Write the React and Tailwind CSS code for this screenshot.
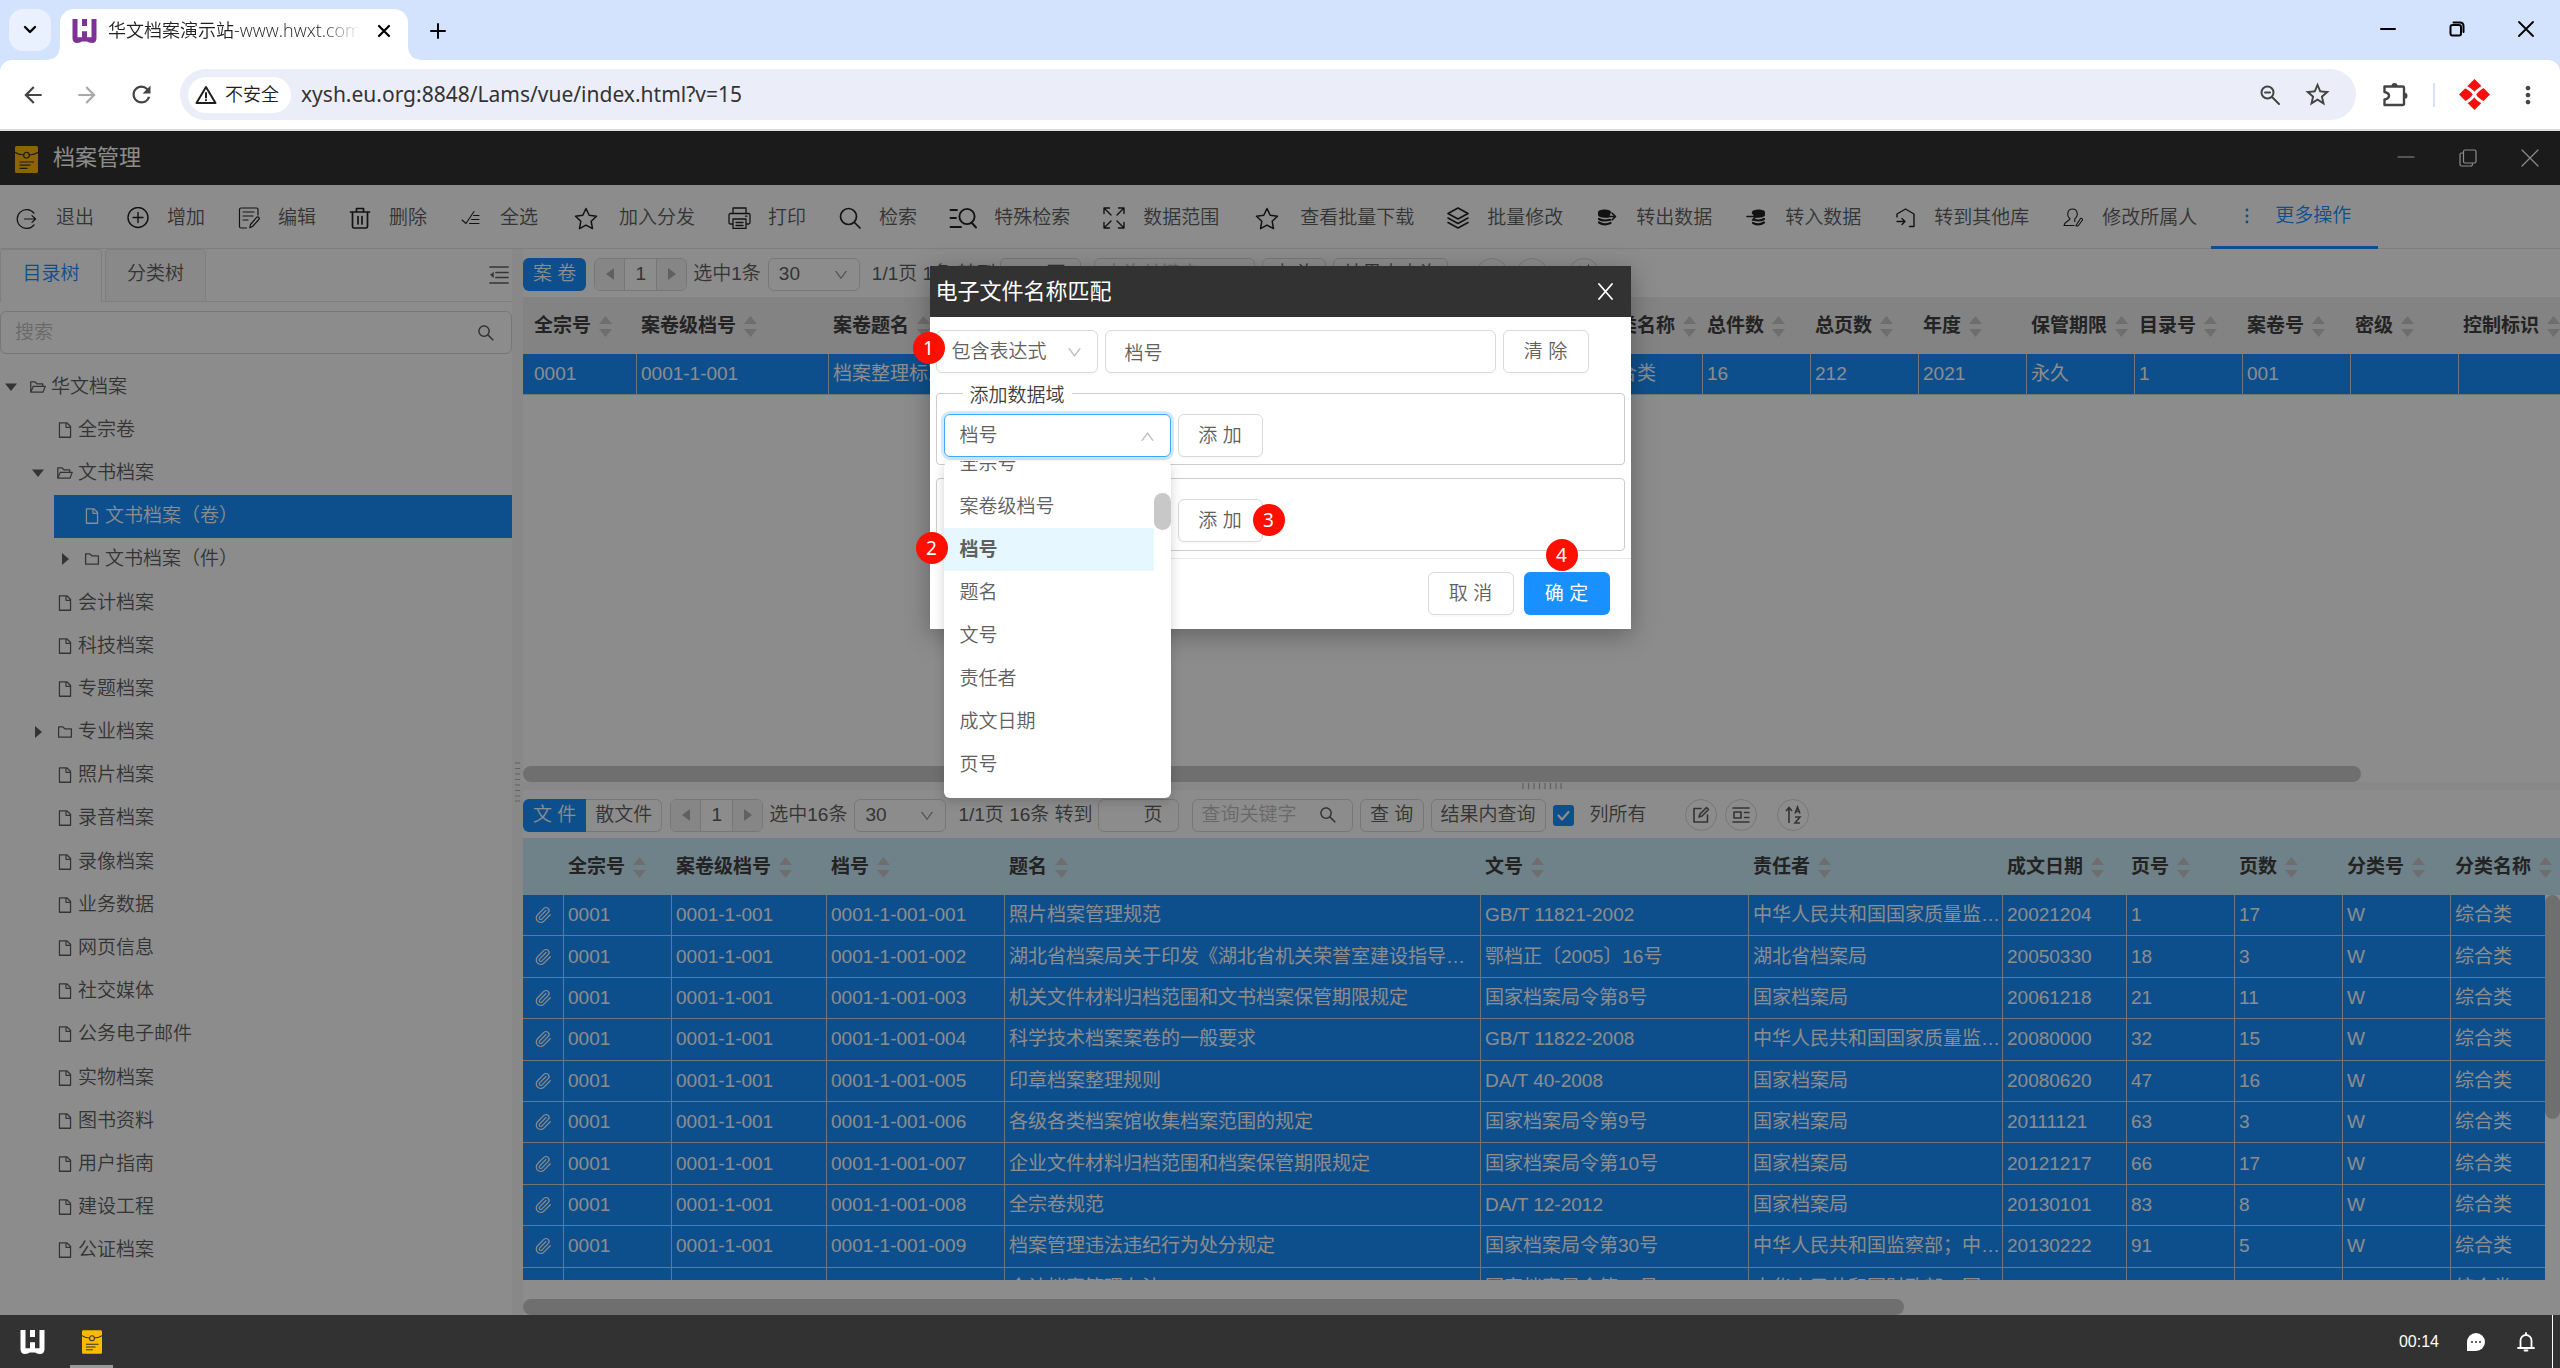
import React from "react";
import {
  AiOutlineSearch, AiOutlineFile, AiOutlineFolderOpen, AiOutlineFolder, AiOutlineDown, AiOutlineUp,
} from "react-icons/ai";
import { MdArrowBack, MdArrowForward, MdRefresh, MdStarBorder, MdMoreVert } from "react-icons/md";
import { Paperclip } from "lucide-react";

const UI = "font-['Liberation_Sans','Noto_Sans_CJK_SC',sans-serif]";

function Svg({ w = 22, h = 22, box, sw = 1.3, className = "", children }) {
  return (
    <svg width={w} height={h} viewBox={box || `0 0 ${w} ${h}`} fill="none" stroke="currentColor" strokeWidth={sw}
      strokeLinecap="round" strokeLinejoin="round" className={`shrink-0 ${className}`} aria-hidden="true">
      {children}
    </svg>
  );
}

/* ---------- logos ---------- */
const WLogo = ({ className }) => (
  <svg width="25" height="24" viewBox="0 0 24 24" className={className} fill="currentColor" aria-hidden="true">
    <path fillRule="evenodd" d="M0 0H5V18.2H9.5V12.2H14.5V18.2H19V0H24V19Q24 24 19.5 24Q16 24 14.6 22.6H9.4Q8 24 4.5 24Q0 24 0 19ZM9.5 0H14.5V7H9.5Z" />
  </svg>
);
const ArchiveLogo = ({ w, h, className }) => (
  <svg width={w} height={h} viewBox="0 0 23 27" className={className} aria-hidden="true">
    <rect width="23" height="27" rx="1.5" fill="#ffb900" />
    <g fill="none" stroke="#323232" strokeWidth="1.2">
      <path d="M0 6.2C3 8.6 6 8.8 8.6 9M23 6.2C20 8.6 17 8.8 14.4 9" />
      <circle cx="11.5" cy="9.2" r="2.8" />
      <path d="M4.5 16H19M4.5 19.2H15.5M4.5 22.4H12.5" />
    </g>
  </svg>
);

/* ---------- toolbar icons ---------- */
const IcExit = () => (
  <Svg sw={1.2}><path d="M18 6.2A9.4 9.4 0 1 0 18 17.8M8.5 12H19.5M16 8.6L19.6 12L16 15.4" /></Svg>
);
const IcPlus = () => (
  <Svg sw={1.4}><circle cx="11" cy="10.500" r="10" /><path d="M11 5.500V15.500M6 10.500H16" /></Svg>
);
const IcEdit = () => (
  <Svg sw={1.2}><path d="M20 8V2.5Q20 1 18.5 1H3Q1.5 1 1.500 2.500V19.500Q1.500 21 3 21H8.500M5 5H16M5 9H15M5 13H10M12.500 17.500L18.800 10.200Q20 9.400 21 10.600Q21.600 11.600 20.800 12.500L14.500 19.500L11.800 20.800Z" /></Svg>
);
const IcTrash = () => (
  <Svg sw={1.7}><path d="M1.500 5H20.500M3.500 5V19.500Q3.500 21 5 21H17Q18.500 21 18.500 19.500V5M7.500 4.500V1.500H14.500V4.500M9 9.500V17M13 9.500V17" /></Svg>
);
const IcCheckAll = () => (
  <Svg sw={1.1}><path d="M2 13L6 16.500L14 4.500M13.500 8.500H19M11.500 12.500H19M9.500 16.500H19" /></Svg>
);
const IcStar = () => (
  <Svg w={24} h={23} sw={1.500}><path d="M12 1.500L15.200 8.200L22.500 9.200L17.200 14.300L18.500 21.600L12 18.100L5.500 21.600L6.800 14.300L1.500 9.200L8.800 8.200Z" /></Svg>
);
const IcPrint = () => (
  <Svg w={23} sw={1.300}><path d="M5 6.500V1H18V6.500M5 17H2.500Q1 17 1 15.500V8Q1 6.500 2.500 6.500H20.500Q22 6.500 22 8V15.500Q22 17 20.500 17H18M5 12H18V21.500H5ZM8 15.500H15M8 18.500H15M17.500 9.200H19" /></Svg>
);
const IcSearch = () => (
  <Svg sw={1.7}><circle cx="9.500" cy="9.500" r="8" /><path d="M15.500 15.500L21 21" /></Svg>
);
const IcSearchList = () => (
  <Svg w={28} sw={1.9}><path d="M1.500 3H8M1.500 11H7M1.500 20H12" /><circle cx="18" cy="9.500" r="7.600" /><path d="M22.500 15.500L27 20.500" /></Svg>
);
const IcExpand = () => (
  <Svg sw={1.4}><path d="M1 6.500V1H6.500M1 1L8 8M15.500 1H21V6.500M21 1L14 8M1 15.500V21H6.500M1 21L8 14M15.500 21H21V15.500M21 21L14 14" /></Svg>
);
const IcLayers = () => (
  <Svg sw={1.6}><path d="M11 1L21 6.500L11 12L1 6.500ZM1 11L11 16.500L21 11M1 15.500L11 21L21 15.500" /></Svg>
);
const IcDbOut = () => (
  <Svg sw={1.6}>
    <path fill="currentColor" stroke="none" d="M2 5.200C2 1.500 15 1.500 15 5.200L13 10.500C9 11.300 2 10.500 2 8Z" />
    <path strokeWidth="2.200" d="M3 12Q7 14.500 14 12.800M3 15.500Q8 19 14.500 16" />
    <path d="M10 9.500H19M16 6L19.500 9.500L16 13" />
  </Svg>
);
const IcDbIn = () => (
  <Svg sw={1.6}>
    <path fill="currentColor" stroke="none" d="M7 5.200C7 1.500 20 1.500 20 5.200V8C20 10.500 13 11.300 9.500 10.500Z" />
    <path strokeWidth="2.200" d="M9 12.800Q15 14.500 19 12M8 16Q14 19 19 15.500" />
    <path d="M2 9.500H11M7.500 6L11 9.500L7.500 13" />
  </Svg>
);
const IcHouse = () => (
  <Svg sw={1.4}><path d="M3 10V7L11.500 2L20 7V19.500H15.500M3 14.500H11M8 11.500L11 14.500L8 17.500" /></Svg>
);
const IcOwner = () => (
  <Svg sw={1.1}><path d="M8 11.500C4.500 9 5 2 10.500 2S16.500 9 13 11.500C13 13 12 13.500 13 14.500M8 11.500C8 14 2.500 14 2 18.500H12M14 18.500L18.500 11.500Q20.500 11 20.500 13L16 19H14Z" /></Svg>
);

const TOOLS = [
  [IcExit, "退出"], [IcPlus, "增加"], [IcEdit, "编辑"], [IcTrash, "删除"], [IcCheckAll, "全选"], [IcStar, "加入分发"],
  [IcPrint, "打印"], [IcSearch, "检索"], [IcSearchList, "特殊检索"], [IcExpand, "数据范围"], [IcStar, "查看批量下载"],
  [IcLayers, "批量修改"], [IcDbOut, "转出数据"], [IcDbIn, "转入数据"], [IcHouse, "转到其他库"], [IcOwner, "修改所属人"],
];

function ToolButton({ Icon, label }) {
  const width = Icon === IcStar ? "w-[30px]" : Icon === IcSearchList ? "w-[26px]" : "w-[22px]";
  return (
    <button className="flex shrink-0 items-center gap-[18px] pt-[3px]">
      <span className={`flex justify-center text-[#222] ${width}`}><Icon /></span>
      {label}
    </button>
  );
}

/* ---------- browser chrome ---------- */
function Browser() {
  return (
    <header className="shrink-0 bg-[#d3e3fd] font-['Noto_Sans','Noto_Sans_CJK_SC',sans-serif]">
      <div className="flex h-[60px] items-start pt-[9px]">
        <button aria-label="搜索标签页" className="ml-[9px] flex size-[42px] items-center justify-center rounded-[14px] bg-[#e9f1fe]">
          <Svg w={14} h={10} sw={2.4}><path d="M2 2L7 7L12 2" /></Svg>
        </button>
        <div className="relative ml-[9px] flex h-[51px] w-[348px] items-center rounded-t-[14px] bg-white pr-[17px] pb-2 pl-3">
          <svg width="15" height="15" className="absolute bottom-0 -left-[15px]"><path d="M15 0Q15 15 0 15H15Z" fill="#fff" /></svg>
          <svg width="15" height="15" className="absolute -right-[15px] bottom-0"><path d="M0 0Q0 15 15 15H0Z" fill="#fff" /></svg>
          <WLogo className="text-[#7d3296]" />
          <span className="ml-[11px] w-[252px] overflow-hidden font-['Open_Sans','Noto_Sans_CJK_SC',sans-serif] text-[18px] font-[350] whitespace-nowrap text-[#1f1f1f] [mask-image:linear-gradient(to_right,black_85%,transparent)]">
            华文档案演示站-www.hwxt.com
          </span>
          <button aria-label="关闭标签页" className="ml-auto"><Svg w={14} h={14} sw={2.2}><path d="M2 2L12 12M12 2L2 12" /></Svg></button>
        </div>
        <button aria-label="新标签页" className="mt-[13px] ml-[21px]"><Svg w={18} h={18} sw={2}><path d="M9 2V16M2 9H16" /></Svg></button>
        <div className="mt-3 mr-[26px] ml-auto flex items-center gap-[53px]">
          <button aria-label="最小化"><Svg w={16} h={16} sw={2}><path d="M1 8H15" /></Svg></button>
          <button aria-label="还原"><Svg w={16} h={16} sw={2}><rect x="1.500" y="4" width="10.500" height="10.500" rx="2" /><path d="M4.500 1.500H11Q14.500 1.500 14.500 5V11" /></Svg></button>
          <button aria-label="关闭"><Svg w={16} h={16} sw={1.800}><path d="M1 1L15 15M15 1L1 15" /></Svg></button>
        </div>
      </div>
      <div className="flex h-[71px] items-center rounded-t-[12px] border-b-2 border-[#dedede] bg-white text-[#444]">
        <button aria-label="后退" className="ml-5"><MdArrowBack size={26} /></button>
        <button aria-label="前进" className="ml-7 text-[#a9a9a9]"><MdArrowForward size={26} /></button>
        <button aria-label="重新加载" className="ml-7"><MdRefresh size={27} /></button>
        <div className="ml-[25px] flex h-[51px] min-w-0 flex-1 items-center rounded-full bg-[#ebeef8] pr-6 pl-2">
          <button className="flex h-9 items-center gap-2 rounded-full bg-white pr-3 pl-[7px] text-[18px] font-[350] text-[#1f1f1f]">
            <Svg w={22} h={20} sw={2}><path d="M11 2L20.500 18H1.500ZM11 8V12.500M11 15V15.200" /></Svg>
            不安全
          </button>
          <input aria-label="地址" readOnly value="xysh.eu.org:8848/Lams/vue/index.html?v=15"
            className="ml-[10px] min-w-0 flex-1 bg-transparent text-[21px] text-[#333] outline-none" />
          <button aria-label="缩放"><Svg w={22} h={22} sw={2}><circle cx="8.500" cy="8.500" r="6" /><path d="M13 13L20 20M6 8.500H11" /></Svg></button>
          <button aria-label="收藏" className="ml-[22px]"><MdStarBorder size={29} /></button>
        </div>
        <button aria-label="扩展程序" className="ml-[25px]">
          <Svg w={28} h={28} sw={2.400}><path d="M3.500 5.500H21.500Q23 5.500 23 7V22.500Q23 24 21.500 24H3.500V18.500Q8 17.500 8 14.700Q8 12 3.500 11Z" /><path fill="currentColor" stroke="none" d="M10.500 5A3 3 0 0 1 16.500 5ZM23.500 11.700A3 3 0 0 1 23.500 17.700Z" /></Svg>
        </button>
        <span className="ml-6 h-6 w-[2px] bg-[#d3e3fd]" />
        <button aria-label="扩展" className="ml-6">
          <svg width="31" height="31" viewBox="0 0 31 31">
            <path d="M15.500 0L31 15.500L15.500 31L0 15.500Z" fill="#f90d0d" />
            <path d="M6 7.500Q14 12 15.500 15.500Q17 20 25 24M25 7Q17 12 15.500 15.500Q13 20 6 24" fill="none" stroke="#fff" strokeWidth="3" />
          </svg>
        </button>
        <button aria-label="菜单" className="mr-[18px] ml-6"><MdMoreVert size={28} /></button>
      </div>
    </header>
  );
}

/* ---------- left tree ---------- */
const TREE = [
  [0, "open", "华文档案"], [1, "file", "全宗卷"], [1, "open", "文书档案"], [2, "file", "文书档案（卷）", true],
  [2, "closed", "文书档案（件）"], [1, "file", "会计档案"], [1, "file", "科技档案"], [1, "file", "专题档案"],
  [1, "closed", "专业档案"], [1, "file", "照片档案"], [1, "file", "录音档案"], [1, "file", "录像档案"],
  [1, "file", "业务数据"], [1, "file", "网页信息"], [1, "file", "社交媒体"], [1, "file", "公务电子邮件"],
  [1, "file", "实物档案"], [1, "file", "图书资料"], [1, "file", "用户指南"], [1, "file", "建设工程"], [1, "file", "公证档案"],
];
const INDENT = ["ml-0", "ml-[27px]", "ml-[54px]"];

function TreeRow({ level, kind, label, active }) {
  const Icon = kind === "file" ? AiOutlineFile : kind === "open" ? AiOutlineFolderOpen : AiOutlineFolder;
  return (
    <li role="treeitem" aria-selected={!!active}
      className={`flex items-center ${INDENT[level]} ${active ? "bg-[#1890ff] text-white" : ""}`}>
      <span className="flex w-[29px] shrink-0 pl-[5px]">
        {kind !== "file" && (
          <svg width="12" height="12" viewBox="0 0 12 12" fill="currentColor">
            <path d={kind === "open" ? "M0 2.500H12L6 10Z" : "M3 0L10 6L3 12Z"} />
          </svg>
        )}
      </span>
      <Icon size={18} className="mr-1 shrink-0" />
      {label}
    </li>
  );
}

function Sidebar() {
  return (
    <aside className="flex w-[512px] shrink-0 flex-col bg-white">
      <div className="flex h-[53px] items-stretch">
        <button className="h-full w-[102px] rounded-t border border-b-0 border-[#e8e8e8] pb-1 text-[#1890ff]">目录树</button>
        <span className="w-[3px] border-b border-[#e8e8e8]" />
        <button className="w-[101px] rounded-t border border-[#e8e8e8] bg-[#fafafa] pb-1">分类树</button>
        <span className="flex flex-1 items-center justify-end border-b border-[#e8e8e8] pr-[3px]">
          <button aria-label="收起"><Svg w={20} h={18} sw={1.700}><path d="M1 1H19M7 6.500H19M7 11.500H19M1 17H19" /><path d="M4.500 6.500V11.500L1.500 9Z" fill="currentColor" strokeWidth="0.500" /></Svg></button>
        </span>
      </div>
      <label className="mt-[9px] flex h-[43px] shrink-0 items-center rounded-md border border-[#d9d9d9] pr-[15px] pl-[14px]">
        <input placeholder="搜索" aria-label="搜索" className="min-w-0 flex-1 bg-transparent outline-none placeholder:text-[#bfbfbf]" />
        <AiOutlineSearch size={20} />
      </label>
      <ul role="tree" className="mt-[11px] grid min-h-0 flex-1 auto-rows-fr pb-[43px]">
        {TREE.map(([level, kind, label, active]) => (
          <TreeRow key={label} level={level} kind={kind} label={label} active={active} />
        ))}
      </ul>
    </aside>
  );
}

/* ---------- grid pieces ---------- */
const box = "h-[33px] rounded-md border border-[#d9d9d9]";

function Pager() {
  return (
    <div className={`ml-2 flex w-[93px] items-stretch overflow-hidden ${box}`}>
      <button aria-label="上一页" className="flex flex-1 items-center justify-center border-r border-[#d9d9d9] bg-[#f5f5f5]"><svg width="8" height="12"><path d="M8 0V12L0 6Z" fill="#b0b0b0" /></svg></button>
      <span className="flex w-[31px] items-center justify-center">1</span>
      <button aria-label="下一页" className="flex flex-1 items-center justify-center border-l border-[#d9d9d9] bg-[#f5f5f5]"><svg width="8" height="12"><path d="M0 0V12L8 6Z" fill="#b0b0b0" /></svg></button>
    </div>
  );
}

function PageSize() {
  return (
    <div className="relative ml-[7px] w-[92px]">
      <select aria-label="每页条数" className={`block w-full appearance-none bg-transparent pl-[10px] ${box}`}><option>30</option></select>
      <AiOutlineDown size={16} className="pointer-events-none absolute top-[9px] right-[11px] text-[#999]" />
    </div>
  );
}

function GridBar({ primary, secondary, selected, summary, checkbox, icons }) {
  return (
    <div className="flex h-12 shrink-0 items-center pt-[2px] whitespace-nowrap">
      <button className={`h-[33px] bg-[#1890ff] px-[10px] text-white ${secondary ? "rounded-l-md" : "rounded-md"}`}>{primary}</button>
      {secondary && <button className="h-[33px] rounded-r-md border border-l-0 border-[#d9d9d9] px-[9px]">{secondary}</button>}
      <Pager />
      <span className="ml-[6px]">{selected}</span>
      <PageSize />
      <span className="ml-3">{summary}</span>
      <label className={`ml-[5px] flex w-[81px] items-center justify-end pr-[15px] ${box}`}>
        <input aria-label="页码" className="w-6 bg-transparent outline-none" />页
      </label>
      <label className={`ml-[13px] flex w-[161px] items-center pr-[14px] pl-[9px] ${box}`}>
        <input aria-label="查询关键字" placeholder="查询关键字" className="w-0 min-w-0 flex-1 bg-transparent outline-none placeholder:text-[#bfbfbf]" />
        <AiOutlineSearch size={20} />
      </label>
      <button className={`ml-[7px] w-16 ${box}`}>查 询</button>
      <button className={`ml-[7px] w-[115px] ${box}`}>结果内查询</button>
      {checkbox && (
        <label className="ml-[7px] flex items-center gap-4">
          <span className="relative flex">
            <input type="checkbox" defaultChecked className="size-[21px] appearance-none rounded-[3px] bg-[#1890ff]" />
            <Svg w={21} h={21} sw={2.200} className="pointer-events-none absolute inset-0 text-white"><path d="M5.500 10.500L9 14.500L15.500 7" /></Svg>
          </span>
          列所有
        </label>
      )}
      <div className={`flex items-center gap-2 ${checkbox ? "ml-[38px]" : "ml-7"}`}>
        {icons.map((icon, i) => (
          <button key={i} aria-label={`工具${i + 1}`} className={`flex size-8 items-center justify-center rounded-full border border-[#d9d9d9] ${i === 2 ? "ml-3" : ""}`}>{icon}</button>
        ))}
      </div>
    </div>
  );
}

const icoEdit = <Svg w={18} h={18} sw={1.600}><path d="M9 2.500H2V16H15.500V9M7 11L8 8L14.500 1.500L16.500 3.500L10 10Z" /></Svg>;
const icoCard = <Svg w={18} h={18} sw={1.600}><path d="M1 2H17M1 16H17M12.500 6.500H17M12.500 11.500H17" /><rect x="2" y="6" width="7" height="6" /></Svg>;
const icoSort = (
  <svg width="18" height="20" viewBox="0 0 18 20" fill="none" stroke="currentColor" strokeWidth="1.600">
    <path d="M5 18V3M2 6L5 2.500L8 6M11 8.500L13.500 2L16 8.500M11.800 6.500H15.200M11 12H16L11 18H16" />
  </svg>
);

const Sort = () => (
  <svg width="13" height="21" viewBox="0 0 13 21" className="ml-2 inline-block align-middle" fill="#c8c8c8" aria-hidden="true">
    <path d="M6.500 0L13 8H0ZM6.500 21L0 13H13Z" />
  </svg>
);

const ROWS_TOP = [["0001", "0001-1-001", "档案整理标准", "综合类", "16", "212", "2021", "永久", "1", "001", "", ""]];
const COLS_TOP = [
  ["全宗号", "w-[113px]"], ["案卷级档号", "w-[192px]"], ["案卷题名", "w-[766px]"], ["分类名称", "w-[108px]"], ["总件数", "w-[108px]"],
  ["总页数", "w-[108px]"], ["年度", "w-[108px]"], ["保管期限", "w-[108px]"], ["目录号", "w-[108px]"], ["案卷号", "w-[108px]"],
  ["密级", "w-[108px]"], ["控制标识", "w-[108px]"],
];
const COLS = [
  ["", "w-[40px]"], ["全宗号", "w-[108px]"], ["案卷级档号", "w-[155px]"], ["档号", "w-[178px]"], ["题名", "w-[476px]"], ["文号", "w-[268px]"],
  ["责任者", "w-[254px]"], ["成文日期", "w-[124px]"], ["页号", "w-[108px]"], ["页数", "w-[108px]"], ["分类号", "w-[108px]"], ["分类名称", ""],
];
const AQSIQ = "中华人民共和国国家质量监督检验检疫总局";
const ROWS = [
  ["照片档案管理规范", "GB/T 11821-2002", AQSIQ, "20021204", "1", "17"],
  ["湖北省档案局关于印发《湖北省机关荣誉室建设指导意见》的通知", "鄂档正〔2005〕16号", "湖北省档案局", "20050330", "18", "3"],
  ["机关文件材料归档范围和文书档案保管期限规定", "国家档案局令第8号", "国家档案局", "20061218", "21", "11"],
  ["科学技术档案案卷的一般要求", "GB/T 11822-2008", AQSIQ, "20080000", "32", "15"],
  ["印章档案整理规则", "DA/T 40-2008", "国家档案局", "20080620", "47", "16"],
  ["各级各类档案馆收集档案范围的规定", "国家档案局令第9号", "国家档案局", "20111121", "63", "3"],
  ["企业文件材料归档范围和档案保管期限规定", "国家档案局令第10号", "国家档案局", "20121217", "66", "17"],
  ["全宗卷规范", "DA/T 12-2012", "国家档案局", "20130101", "83", "8"],
  ["档案管理违法违纪行为处分规定", "国家档案局令第30号", "中华人民共和国监察部；中华人民共和国人力资源", "20130222", "91", "5"],
  ["会计档案管理办法", "国家档案局令第79号", "中华人民共和国财政部；国家档案局", "20151211", "96", "9"],
].map((r, i) => [
  <Paperclip key="clip" size={18} strokeWidth={1.600} className="mx-auto" />, "0001", "0001-1-001",
  `0001-1-001-${String(i + 1).padStart(3, "0")}`, ...r, "W", "综合类",
]);

function Grid({ cols, rows, headBg, tableClass, firstPad }) {
  return (
    <table className={`w-full table-fixed border-separate border-spacing-0 whitespace-nowrap ${tableClass}`}>
      <thead>
        <tr className={headBg}>
          {cols.map(([name, w], i) => (
            <th key={i} className={`h-[57px] overflow-hidden text-left font-bold text-[#404040] ${w} ${i === 0 ? firstPad : "pl-[5px]"}`}>
              {name && <>{name}<Sort /></>}
            </th>
          ))}
        </tr>
      </thead>
      <tbody>
        {rows.map((row, r) => (
          <tr key={r} className="bg-[#1890ff] font-normal text-white">
            {row.map((cell, i) => (
              <td key={i} className={`truncate border-b border-[#d4d4d4] ${i === 0 ? firstPad : "border-l pl-1"}`}>{cell}</td>
            ))}
          </tr>
        ))}
      </tbody>
    </table>
  );
}

/* ---------- dialog ---------- */
const OPTIONS = ["全宗号", "案卷级档号", "档号", "题名", "文号", "责任者", "成文日期", "页号"];
const btn = "h-[43px] rounded-md border border-[#d9d9d9] bg-white shadow-[0_2px_0_rgba(0,0,0,0.02)]";

const Badge = ({ n, className }) => (
  <span className={`absolute z-20 flex size-8 items-center justify-center rounded-full bg-[#ff0f00] font-['Noto_Sans',sans-serif] text-[19px] font-normal text-white ${className}`}>{n}</span>
);

function Dialog() {
  return (
    <section role="dialog" aria-label="电子文件名称匹配" className="w-[701px] self-start bg-white shadow-[0_6px_24px_rgba(0,0,0,0.3)]">
      <header className="flex h-[51px] items-center justify-between bg-[#323232] pr-[17px] pl-[6px] text-white">
        <h2 className="text-[22px] font-normal">电子文件名称匹配</h2>
        <button aria-label="关闭"><Svg w={17} h={17} sw={1.800}><path d="M2 1L15 16M15 1L2 16" /></Svg></button>
      </header>
      <div className="px-[6px] pt-[13px] pb-[7px]">
        <div className="relative flex">
          <Badge n="1" className="top-[2px] -left-[23px]" />
          <div className="relative w-[162px]">
            <select aria-label="匹配方式" className={`block w-full appearance-none pl-[15px] ${btn}`}><option>包含表达式</option></select>
            <AiOutlineDown size={17} className="pointer-events-none absolute top-[14px] right-[15px] text-[#bfbfbf]" />
          </div>
          <input aria-label="表达式" defaultValue="档号" className={`ml-[7px] w-[391px] pl-[19px] ${btn}`} />
          <button className={`ml-[7px] w-[86px] ${btn}`}>清 除</button>
        </div>
        <fieldset className="rounded-sm border border-[#ccc] px-[7px] pb-[7px]">
          <legend className="ml-[19px] h-[41px] bg-white px-[7px] leading-[46px] text-[#404040]">添加数据域</legend>
          <div className="relative flex">
            <div className="relative w-[227px]">
              <select aria-label="数据域" className="block h-[43px] w-full appearance-none rounded-md border border-[#40a9ff] bg-white pl-[15px] shadow-[0_0_0_3px_rgba(24,144,255,0.2)]"><option>档号</option></select>
              <AiOutlineUp size={17} className="pointer-events-none absolute top-[14px] right-[15px] text-[#bfbfbf]" />
              <div className="absolute top-[47px] left-0 z-10 flex h-[337px] w-full overflow-hidden rounded-md bg-white shadow-[0_3px_12px_rgba(0,0,0,0.18)]">
                <ul role="listbox" className="-mt-[19px] flex-1">
                  {OPTIONS.map((o) => (
                    <li key={o} role="option" aria-selected={o === "档号"}
                      className={`flex h-[43px] items-center pl-4 ${o === "档号" ? "bg-[#e6f7ff] font-bold" : ""}`}>{o}</li>
                  ))}
                </ul>
                <span className="mt-8 h-[37px] w-[17px] rounded-full bg-[#c8c8c8]" />
              </div>
              <Badge n="2" className="top-[118px] -left-7" />
            </div>
            <button className={`ml-[7px] w-[85px] ${btn}`}>添 加</button>
          </div>
        </fieldset>
        <fieldset className="mt-[13px] rounded-sm border border-[#ccc] px-[7px] pt-5 pb-2">
          <div className="relative flex">
            <select aria-label="分隔符" className={`block w-[227px] appearance-none pl-[15px] ${btn}`}><option>-</option></select>
            <button className={`ml-[7px] w-[85px] ${btn}`}>添 加</button>
            <Badge n="3" className="top-[5px] left-[309px]" />
          </div>
        </fieldset>
      </div>
      <footer className="relative flex justify-end gap-[10px] border-t border-[#e8e8e8] pt-[13px] pr-[21px] pb-[14px]">
        <Badge n="4" className="-top-5 right-[53px]" />
        <button className={`w-[86px] ${btn}`}>取 消</button>
        <button className="h-[43px] w-[86px] rounded-md bg-[#1890ff] font-normal text-white">确 定</button>
      </footer>
    </section>
  );
}

export default function App() {
  return (
    <div className="flex h-screen flex-col overflow-hidden">
      <Browser />
      <main className={`relative flex min-h-0 flex-1 flex-col bg-white text-[19px] leading-7 font-[350] text-[#606060] ${UI}`}>
        <div className="flex h-[54px] shrink-0 items-center bg-[#323232] pr-[21px] pl-[15px] text-white">
          <ArchiveLogo w={23} h={27} className="mt-[2px]" />
          <h1 className="ml-[15px] text-[22px] font-normal">档案管理</h1>
          <div className="ml-auto flex items-center gap-11">
            <button aria-label="最小化"><Svg w={18} h={18} sw={1.200}><path d="M1 8H17" /></Svg></button>
            <button aria-label="还原"><Svg w={18} h={18} sw={1.200}><rect x="4.500" y="1" width="12.500" height="13" rx="1.500" /><path d="M4.500 4H2.500Q1 4 1 5.500V15.500Q1 17 2.500 17H12Q13.500 17 13.500 14.500" /></Svg></button>
            <button aria-label="关闭"><Svg w={18} h={18} sw={1.200}><path d="M1 1L17 17M17 1L1 17" /></Svg></button>
          </div>
        </div>
        <nav className="flex h-16 shrink-0 gap-[33px] border-b border-[#e8e8e8] pl-4 whitespace-nowrap">
          {TOOLS.map(([Icon, label]) => <ToolButton key={label} Icon={Icon} label={label} />)}
          <button className="-mb-px -ml-[19px] flex w-[167px] shrink-0 items-center border-b-[3px] border-[#1890ff] pl-[34px] text-[#1890ff]">
            <svg width="4" height="18" fill="currentColor"><circle cx="2" cy="3" r="1.400" /><circle cx="2" cy="9" r="1.400" /><circle cx="2" cy="15" r="1.400" /></svg>
            <span className="ml-[26px]">更多操作</span>
          </button>
        </nav>
        <div className="flex min-h-0 flex-1">
          <Sidebar />
          <div className="flex w-[11px] shrink-0 flex-col items-center justify-center bg-[#f7f7f7]">
            <svg width="5" height="40" className="text-[#b0b0b0]"><path d="M0 1H5M0 6.500H5M0 12H5M0 17.500H5M0 23H5M0 28.500H5M0 34H5M0 39H5" stroke="currentColor" strokeWidth="1.200" /></svg>
          </div>
          <div className="flex min-w-0 flex-1 flex-col">
            <section className="flex h-1/2 flex-col overflow-hidden">
              <GridBar primary="案 卷" selected="选中1条" summary="1/1页 1条 转到" icons={[icoEdit, icoCard, icoSort]} />
              <div className="min-h-0 flex-1 overflow-hidden">
                <Grid cols={COLS_TOP} rows={ROWS_TOP} headBg="bg-[#eee]" firstPad="pl-[11px]" tableClass="h-[98px]" />
              </div>
              <div className="h-4 w-[1838px] shrink-0 rounded-full bg-[#cbcbcb]" />
            </section>
            <div className="flex h-2 shrink-0 items-center justify-center bg-[#f7f7f7]">
              <svg width="40" height="6"><path d="M1 0V6M6.500 0V6M12 0V6M17.500 0V6M23 0V6M28.500 0V6M34 0V6M39 0V6" stroke="#b0b0b0" strokeWidth="1.200" /></svg>
            </div>
            <section className="flex min-h-0 flex-1 flex-col">
              <GridBar primary="文 件" secondary="散文件" selected="选中16条" summary="1/1页 16条 转到" checkbox icons={[icoEdit, icoCard, icoSort]} />
              <div className="relative min-h-0 flex-1 overflow-hidden">
                <Grid cols={COLS} rows={ROWS} headBg="bg-[#cbedfb]" firstPad="px-0" tableClass="h-[471px]" />
                <div className="absolute top-[57px] right-0 bottom-0 w-[15px] bg-white">
                  <div className="h-[224px] rounded-full bg-[#cbcbcb]" />
                </div>
              </div>
              <div className="mt-[19px] h-4 w-[1381px] shrink-0 rounded-full bg-[#cbcbcb]" />
            </section>
          </div>
        </div>
        <div className="absolute inset-0 flex justify-center bg-black/45 pt-[135px]">
          <Dialog />
        </div>
      </main>
      <footer className="flex h-[53px] shrink-0 items-center bg-[#323232] text-white">
        <button aria-label="开始" className="ml-5"><WLogo /></button>
        <button aria-label="档案管理" className="ml-[25px] flex h-full w-[43px] items-center justify-center border-b-[3px] border-[#999]"><ArchiveLogo w={20} h={24} className="mt-[3px]" /></button>
        <time className={`ml-auto text-[16px] ${UI}`}>00:14</time>
        <button aria-label="消息" className="ml-7">
          <svg width="18" height="18" viewBox="0 0 18 18"><path d="M9 0A9 9 0 0 1 9 18H0V9A9 9 0 0 1 9 0Z" fill="#fff" /><g fill="#323232"><circle cx="5" cy="9" r="1" /><circle cx="9" cy="9" r="1" /><circle cx="13" cy="9" r="1" /></g></svg>
        </button>
        <button aria-label="通知" className="ml-8"><Svg w={18} h={20} sw={1.800}><path d="M1 16H17M3.500 16V8.500A5.500 5.500 0 0 1 14.500 8.500V16M9 1V2.500M7.500 18.500H10.500" /></Svg></button>
        <span className="mr-[7px] ml-[17px] h-full w-px bg-white" />
      </footer>
    </div>
  );
}
